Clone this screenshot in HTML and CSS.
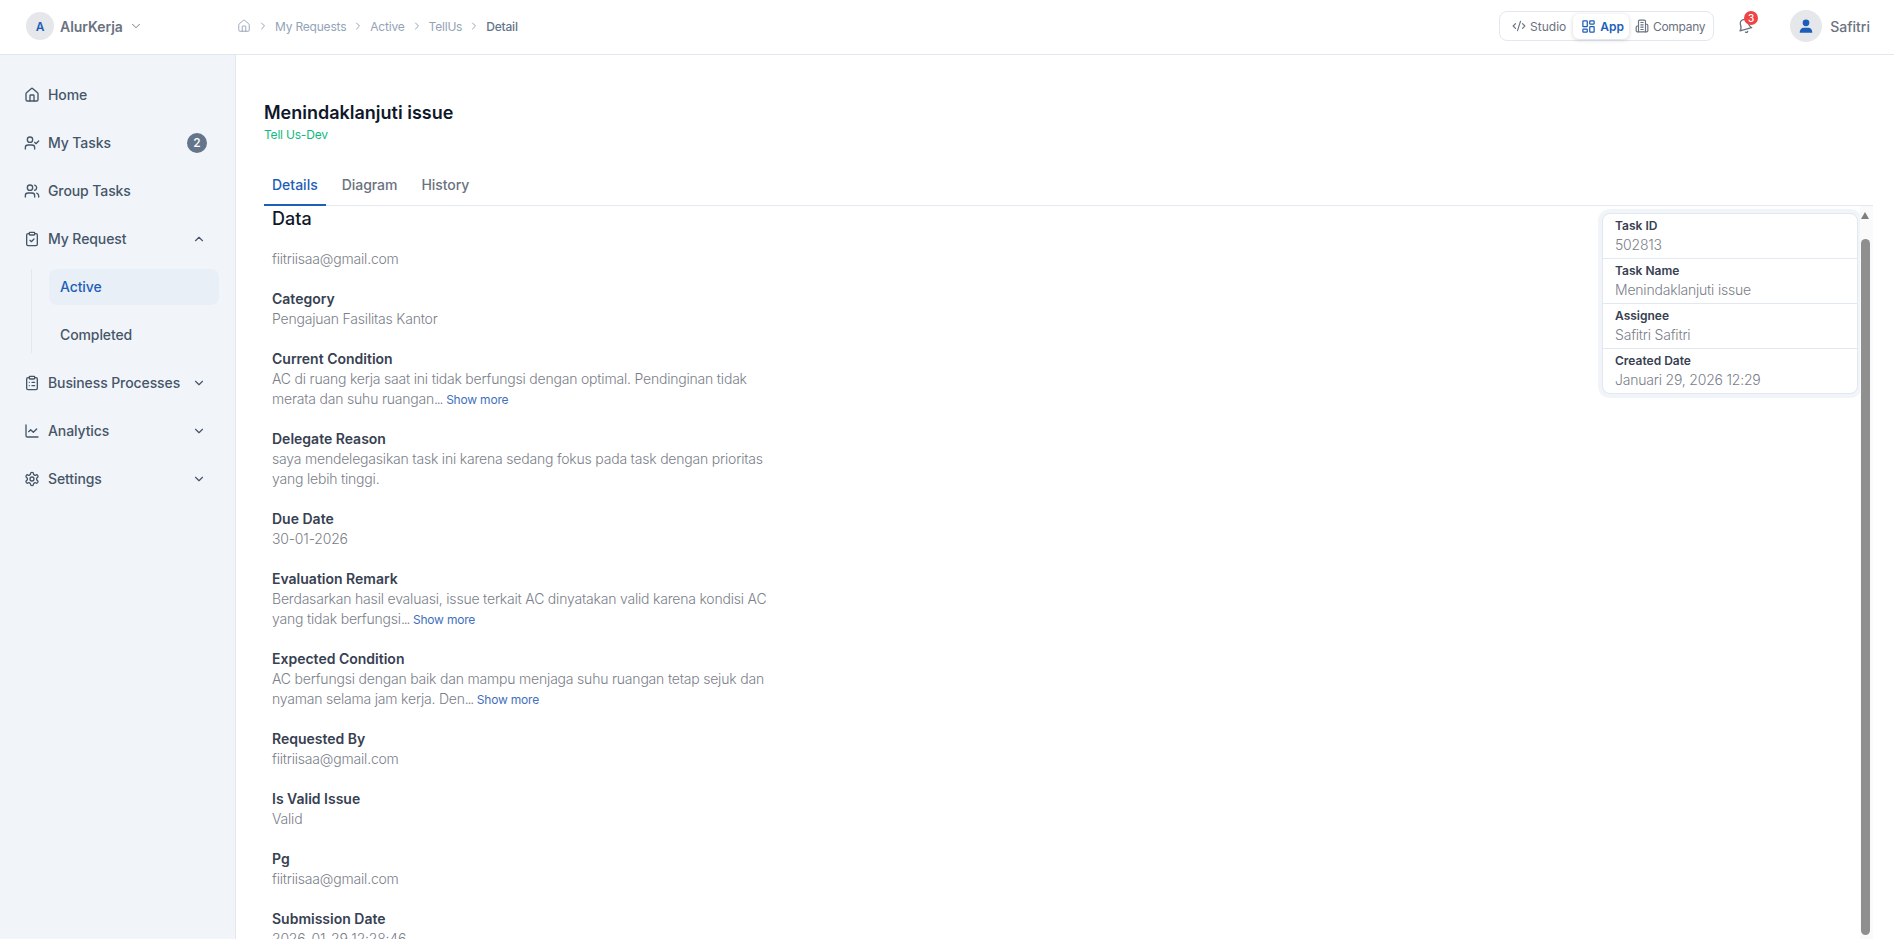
FILE: index.html
```html
<!DOCTYPE html>
<html lang="id">
<head>
  <meta charset="UTF-8">
  <title>Menindaklanjuti issue</title>
  <link rel="stylesheet" href="styles.css">
</head>
<body>
  <svg class="sprite" xmlns="http://www.w3.org/2000/svg">
    <symbol id="i-home" viewBox="0 0 24 24"><path d="M15 21v-8a1 1 0 0 0-1-1h-4a1 1 0 0 0-1 1v8"/><path d="M3 10a2 2 0 0 1 .709-1.528l7-5.999a2 2 0 0 1 2.582 0l7 5.999A2 2 0 0 1 21 10v9a2 2 0 0 1-2 2H5a2 2 0 0 1-2-2z"/></symbol>
    <symbol id="i-user-check" viewBox="0 0 24 24"><path d="M16 21v-2a4 4 0 0 0-4-4H6a4 4 0 0 0-4 4v2"/><circle cx="9" cy="7" r="4"/><polyline points="16 11 18 13 22 9"/></symbol>
    <symbol id="i-users" viewBox="0 0 24 24"><path d="M16 21v-2a4 4 0 0 0-4-4H6a4 4 0 0 0-4 4v2"/><circle cx="9" cy="7" r="4"/><path d="M22 21v-2a4 4 0 0 0-3-3.87"/><path d="M16 3.13a4 4 0 0 1 0 7.75"/></symbol>
    <symbol id="i-clip-check" viewBox="0 0 24 24"><rect width="8" height="4" x="8" y="2" rx="1" ry="1"/><path d="M16 4h2a2 2 0 0 1 2 2v14a2 2 0 0 1-2 2H6a2 2 0 0 1-2-2V6a2 2 0 0 1 2-2h2"/><path d="m9 14 2 2 4-4"/></symbol>
    <symbol id="i-clip-list" viewBox="0 0 24 24"><rect width="8" height="4" x="8" y="2" rx="1" ry="1"/><path d="M16 4h2a2 2 0 0 1 2 2v14a2 2 0 0 1-2 2H6a2 2 0 0 1-2-2V6a2 2 0 0 1 2-2h2"/><path d="M12 11h4"/><path d="M12 16h4"/><path d="M8 11h.01"/><path d="M8 16h.01"/></symbol>
    <symbol id="i-chart" viewBox="0 0 24 24"><path d="M3 3v16a2 2 0 0 0 2 2h16"/><path d="m19 9-5 5-4-4-3 3"/></symbol>
    <symbol id="i-settings" viewBox="0 0 24 24"><path d="M12.22 2h-.44a2 2 0 0 0-2 2v.18a2 2 0 0 1-1 1.73l-.43.25a2 2 0 0 1-2 0l-.15-.08a2 2 0 0 0-2.73.73l-.22.38a2 2 0 0 0 .73 2.73l.15.1a2 2 0 0 1 1 1.72v.51a2 2 0 0 1-1 1.74l-.15.09a2 2 0 0 0-.73 2.73l.22.38a2 2 0 0 0 2.73.73l.15-.08a2 2 0 0 1 2 0l.43.25a2 2 0 0 1 1 1.73V20a2 2 0 0 0 2 2h.44a2 2 0 0 0 2-2v-.18a2 2 0 0 1 1-1.73l.43-.25a2 2 0 0 1 2 0l.15.08a2 2 0 0 0 2.73-.73l.22-.39a2 2 0 0 0-.73-2.73l-.15-.08a2 2 0 0 1-1-1.74v-.5a2 2 0 0 1 1-1.74l.15-.09a2 2 0 0 0 .73-2.73l-.22-.38a2 2 0 0 0-2.73-.73l-.15.08a2 2 0 0 1-2 0l-.43-.25a2 2 0 0 1-1-1.73V4a2 2 0 0 0-2-2z"/><circle cx="12" cy="12" r="3"/></symbol>
    <symbol id="i-down" viewBox="0 0 24 24"><path d="m6 9 6 6 6-6"/></symbol>
    <symbol id="i-up" viewBox="0 0 24 24"><path d="m18 15-6-6-6 6"/></symbol>
    <symbol id="i-right" viewBox="0 0 24 24"><path d="m9 18 6-6-6-6"/></symbol>
    <symbol id="i-code" viewBox="0 0 24 24"><path d="m18 16 4-4-4-4"/><path d="m6 8-4 4 4 4"/><path d="m14.5 4-5 16"/></symbol>
    <symbol id="i-dashboard" viewBox="0 0 24 24"><rect width="7" height="9" x="3" y="3" rx="1"/><rect width="7" height="5" x="14" y="3" rx="1"/><rect width="7" height="9" x="14" y="12" rx="1"/><rect width="7" height="5" x="3" y="16" rx="1"/></symbol>
    <symbol id="i-building" viewBox="0 0 24 24"><path d="M6 22V4a2 2 0 0 1 2-2h8a2 2 0 0 1 2 2v18Z"/><path d="M6 12H4a2 2 0 0 0-2 2v6a2 2 0 0 0 2 2h2"/><path d="M18 9h2a2 2 0 0 1 2 2v9a2 2 0 0 1-2 2h-2"/><path d="M10 6h4"/><path d="M10 10h4"/><path d="M10 14h4"/><path d="M10 18h4"/></symbol>
    <symbol id="i-bell" viewBox="0 0 24 24"><path d="M6 8a6 6 0 0 1 12 0c0 7 3 9 3 9H3s3-2 3-9"/><path d="M10.3 21a1.94 1.94 0 0 0 3.4 0"/></symbol>
  </svg>

  <header class="topbar">
    <div class="brand">
      <span class="brand-mark">A</span>
      <span class="brand-name">AlurKerja</span>
      <svg class="ico ico-14 thin"><use href="#i-down"/></svg>
    </div>
    <nav class="crumbs">
      <svg class="ico ico-14 thin"><use href="#i-home"/></svg>
      <svg class="ico ico-12"><use href="#i-right"/></svg>
      <span>My Requests</span>
      <svg class="ico ico-12"><use href="#i-right"/></svg>
      <span>Active</span>
      <svg class="ico ico-12"><use href="#i-right"/></svg>
      <span>TellUs</span>
      <svg class="ico ico-12"><use href="#i-right"/></svg>
      <span class="crumb-current">Detail</span>
    </nav>
    <div class="top-right">
      <div class="switcher">
        <a class="switch-item studio"><svg class="ico ico-14"><use href="#i-code"/></svg>Studio</a>
        <a class="switch-item active"><svg class="ico ico-15"><use href="#i-dashboard"/></svg>App</a>
        <a class="switch-item company"><svg class="ico ico-14"><use href="#i-building"/></svg>Company</a>
      </div>
      <div class="bell">
        <svg class="ico ico-16 bell-ico"><use href="#i-bell"/></svg>
        <span class="bell-count">3</span>
      </div>
      <div class="profile">
        <span class="avatar">
          <svg viewBox="0 0 24 24" width="16" height="16"><circle cx="12" cy="7.2" r="5"/><path d="M2.5 22c0-5 3-7.5 6-7.5h7c3 0 6 2.500 6 7.500z"/></svg>
        </span>
        <span class="profile-name">Safitri</span>
      </div>
    </div>
  </header>

  <div class="shell">
    <aside class="sidebar">
      <a class="nav-item"><svg class="ico ico-16"><use href="#i-home"/></svg><span class="nav-label">Home</span></a>
      <a class="nav-item"><svg class="ico ico-16"><use href="#i-user-check"/></svg><span class="nav-label">My Tasks</span><span class="nav-badge">2</span></a>
      <a class="nav-item"><svg class="ico ico-16"><use href="#i-users"/></svg><span class="nav-label">Group Tasks</span></a>
      <a class="nav-item"><svg class="ico ico-16"><use href="#i-clip-check"/></svg><span class="nav-label">My Request</span><svg class="ico ico-14"><use href="#i-up"/></svg></a>
      <div class="subnav">
        <a class="sub-item active">Active</a>
        <a class="sub-item">Completed</a>
      </div>
      <a class="nav-item"><svg class="ico ico-16"><use href="#i-clip-list"/></svg><span class="nav-label">Business Processes</span><svg class="ico ico-14"><use href="#i-down"/></svg></a>
      <a class="nav-item"><svg class="ico ico-16"><use href="#i-chart"/></svg><span class="nav-label">Analytics</span><svg class="ico ico-14"><use href="#i-down"/></svg></a>
      <a class="nav-item"><svg class="ico ico-16"><use href="#i-settings"/></svg><span class="nav-label">Settings</span><svg class="ico ico-14"><use href="#i-down"/></svg></a>
    </aside>

    <main class="main">
      <h1 class="page-title">Menindaklanjuti issue</h1>
      <p class="page-sub">Tell Us-Dev</p>

      <div class="tabs">
        <a class="tab active">Details</a>
        <a class="tab">Diagram</a>
        <a class="tab">History</a>
      </div>

      <div class="pane">
        <section class="data">
          <h2 class="data-title">Data</h2>
          <div class="field"><p class="value">fiitriisaa@gmail.com</p></div>
          <div class="field"><p class="label">Category</p><p class="value">Pengajuan Fasilitas Kantor</p></div>
          <div class="field"><p class="label">Current Condition</p><p class="value">AC di ruang kerja saat ini tidak berfungsi dengan optimal. Pendinginan tidak merata dan suhu ruangan<span class="dots">...</span> <a class="more">Show more</a></p></div>
          <div class="field"><p class="label">Delegate Reason</p><p class="value">saya mendelegasikan task ini karena sedang fokus pada task dengan prioritas yang lebih tinggi.</p></div>
          <div class="field"><p class="label">Due Date</p><p class="value">30-01-2026</p></div>
          <div class="field"><p class="label">Evaluation Remark</p><p class="value">Berdasarkan hasil evaluasi, issue terkait AC dinyatakan valid karena kondisi AC yang tidak berfungsi<span class="dots">...</span> <a class="more">Show more</a></p></div>
          <div class="field"><p class="label">Expected Condition</p><p class="value">AC berfungsi dengan baik dan mampu menjaga suhu ruangan tetap sejuk dan nyaman selama jam kerja. Den<span class="dots">...</span> <a class="more">Show more</a></p></div>
          <div class="field"><p class="label">Requested By</p><p class="value">fiitriisaa@gmail.com</p></div>
          <div class="field"><p class="label">Is Valid Issue</p><p class="value">Valid</p></div>
          <div class="field"><p class="label">Pg</p><p class="value">fiitriisaa@gmail.com</p></div>
          <div class="field"><p class="label">Submission Date</p><p class="value">2026-01-29 12:28:46</p></div>
        </section>

        <aside class="summary">
          <div class="summary-row"><p class="summary-label">Task ID</p><p class="summary-value">502813</p></div>
          <div class="summary-row"><p class="summary-label">Task Name</p><p class="summary-value">Menindaklanjuti issue</p></div>
          <div class="summary-row"><p class="summary-label">Assignee</p><p class="summary-value">Safitri Safitri</p></div>
          <div class="summary-row"><p class="summary-label">Created Date</p><p class="summary-value">Januari 29, 2026 12:29</p></div>
        </aside>

        <div class="scrollbar">
          <span class="scroll-arrow"></span>
          <span class="scroll-thumb"></span>
        </div>
      </div>
    </main>
  </div>
</body>
</html>
```

FILE: styles.css
```css
* { box-sizing: border-box; }
html, body { height: 100%; }
body {
  margin: 0;
  overflow: hidden;
  background: #fff;
  color: #475569;
  font-family: Inter, "Liberation Sans", sans-serif;
  font-size: 14px;
  display: flex;
  flex-direction: column;
}
p, h1, h2 { margin: 0; }
.sprite { display: none; }
.ico {
  flex: none;
  fill: none;
  stroke: currentColor;
  stroke-width: 2;
  stroke-linecap: round;
  stroke-linejoin: round;
}
.ico.thin { stroke-width: 1.6; }
.ico-12 { width: 12px; height: 12px; }
.ico-14 { width: 14px; height: 14px; }
.ico-15 { width: 15px; height: 15px; }
.ico-16 { width: 16px; height: 16px; }

/* top bar */
.topbar {
  flex: none;
  height: 55px;
  padding-bottom: 2px;
  display: flex;
  align-items: center;
  border-bottom: 1px solid #e2e8f0;
  background: #fff;
}
.brand {
  width: 237px;
  padding-left: 26px;
  display: flex;
  align-items: center;
  color: #6b7280;
}
.brand-mark {
  width: 28px; height: 28px;
  border-radius: 50%;
  background: #e5e7eb;
  color: #1d5fb8;
  font-size: 12px;
  font-weight: 600;
  display: flex;
  align-items: center;
  justify-content: center;
  margin-right: 6px;
}
.brand-name { font-size: 14px; font-weight: 600; margin-right: 6px; letter-spacing: -.05px; }
.crumbs {
  display: flex;
  align-items: center;
  gap: 6px;
  font-size: 12px;
  color: #94a3b8;
  letter-spacing: -.2px;
}
.crumb-current { color: #64748b; font-weight: 500; }
.top-right {
  margin-left: auto;
  padding-right: 24px;
  display: flex;
  align-items: center;
}
.switcher {
  display: flex;
  align-items: center;
  height: 30px;
  padding: 0 2px;
  border: 1px solid #e2e8f0;
  border-radius: 8px;
  font-size: 12px;
  color: #6b7280;
}
.switch-item {
  display: flex;
  align-items: center;
  gap: 4px;
  height: 25px;
  padding: 0 7px;
  border-radius: 6px;
}
.switch-item.studio { padding-left: 10px; }
.switch-item.company { padding: 0 6px; letter-spacing: -.3px; }
.switch-item.active {
  padding: 0 5px 0 8px;
  background: #fff;
  color: #1d5fb8;
  font-weight: 600;
  box-shadow: 0 1px 4px rgba(15, 23, 42, .18);
}
.bell { position: relative; margin-left: 23px; height: 16px; color: #6b7280; }
.bell-ico { display: block; transform: rotate(-15deg); }
.bell-count {
  position: absolute;
  top: -7px; left: 7px;
  width: 14px; height: 14px;
  border-radius: 50%;
  background: #ef4444;
  color: #fff;
  font-size: 10px;
  font-weight: 500;
  line-height: 14px;
  text-align: center;
}
.profile { display: flex; align-items: center; gap: 8px; margin-left: 37px; }
.avatar {
  width: 32px; height: 32px;
  border-radius: 50%;
  background: #e5e7eb;
  display: flex;
  align-items: center;
  justify-content: center;
}
.avatar svg { fill: #1d5fb8; }
.profile-name { font-size: 14px; font-weight: 500; color: #6b7280; }

/* layout */
.shell { flex: 1; min-height: 0; display: flex; }

/* sidebar */
.sidebar {
  flex: none;
  width: 236px;
  padding: 22px 16px 0;
  background: #f1f5f9;
  border-right: 1px solid #e2e8f0;
  display: flex;
  flex-direction: column;
  gap: 12px;
}
.nav-item {
  display: flex;
  align-items: center;
  gap: 8px;
  height: 36px;
  padding: 0 13px 0 8px;
  font-weight: 500;
  letter-spacing: -.1px;
}
.nav-label { flex: 1; margin-top: -2px; }
.nav-badge {
  width: 20px; height: 20px;
  margin-right: -1px;
  border-radius: 50%;
  background: #64748b;
  color: #fff;
  font-size: 12px;
  line-height: 20px;
  text-align: center;
}
.subnav {
  display: flex;
  flex-direction: column;
  gap: 12px;
  margin-left: 15px;
  padding-left: 17px;
  border-left: 1px solid #e2e8f0;
}
.sub-item {
  height: 36px;
  padding: 0 11px 2px;
  border-radius: 8px;
  display: flex;
  align-items: center;
  font-weight: 500;
  letter-spacing: -.1px;
}
.sub-item.active { background: #e9eff7; color: #1d5fb8; }

/* main */
.main {
  flex: 1;
  min-width: 0;
  padding: 44px 21px 0 28px;
  display: flex;
  flex-direction: column;
}
.page-title { font-size: 18px; line-height: 28px; font-weight: 600; color: #0f172a; }
.page-sub { font-size: 12px; line-height: 16px; color: #10b981; letter-spacing: -.2px; }
.tabs {
  flex: none;
  display: flex;
  gap: 8px;
  height: 40px;
  margin-top: 23px;
  border-bottom: 1px solid #e2e8f0;
}
.tab {
  padding: 0 8px 2px;
  display: flex;
  align-items: center;
  margin-bottom: -1px;
  font-weight: 500;
  color: #6b7280;
  border-bottom: 2px solid transparent;
  letter-spacing: -.05px;
}
.tab.active { color: #1d5fb8; border-bottom-color: #1d5fb8; letter-spacing: 0; }

/* details pane */
.pane {
  flex: 1;
  min-height: 0;
  position: relative;
  overflow: hidden;
  display: flex;
  justify-content: space-between;
  align-items: flex-start;
  padding-right: 15px;
}
.data { width: 508px; padding-left: 8px; }
.data-title { font-size: 18px; line-height: 28px; font-weight: 500; color: #0f172a; margin: -1px 0 16px; }
.field { margin-bottom: 20px; line-height: 20px; }
.label { font-weight: 600; color: #374151; }
.value { color: #7b8089; font-weight: 300; letter-spacing: -.2px; }
.dots { letter-spacing: -1.2px; }
.more { font-size: 12px; line-height: 1; color: #3f6fbd; letter-spacing: -.2px; font-weight: 400; }

.summary {
  flex: none;
  width: 256px;
  margin-top: 7px;
  background: #fff;
  border: 1px solid #e2e8f0;
  border-radius: 8px;
  box-shadow: 0 0 0 4px #f1f5f9;
}
.summary-row {
  height: 45px;
  padding: 3px 12px 0;
  border-bottom: 1px solid #e2e8f0;
}
.summary-row:last-child { border-bottom: 0; height: 44px; }
.summary-label { font-size: 12px; line-height: 18px; font-weight: 600; color: #374151; }
.summary-value { font-size: 14px; line-height: 20px; color: #7b8089; font-weight: 300; letter-spacing: -.2px; }

/* drawn scrollbar, sits over the pane's right edge */
.scrollbar {
  position: absolute;
  top: 0; right: 0; bottom: 0;
  width: 13px;
  background: #fafafa;
}
.scroll-arrow {
  position: absolute;
  top: 6px; left: 1px;
  border-left: 4.5px solid transparent;
  border-right: 4.5px solid transparent;
  border-bottom: 7px solid #7f7f7f;
}
.scroll-thumb {
  position: absolute;
  top: 33px; left: 1px;
  width: 9px; height: 696px;
  border-radius: 5px;
  background: #8f8f8f;
}
```
